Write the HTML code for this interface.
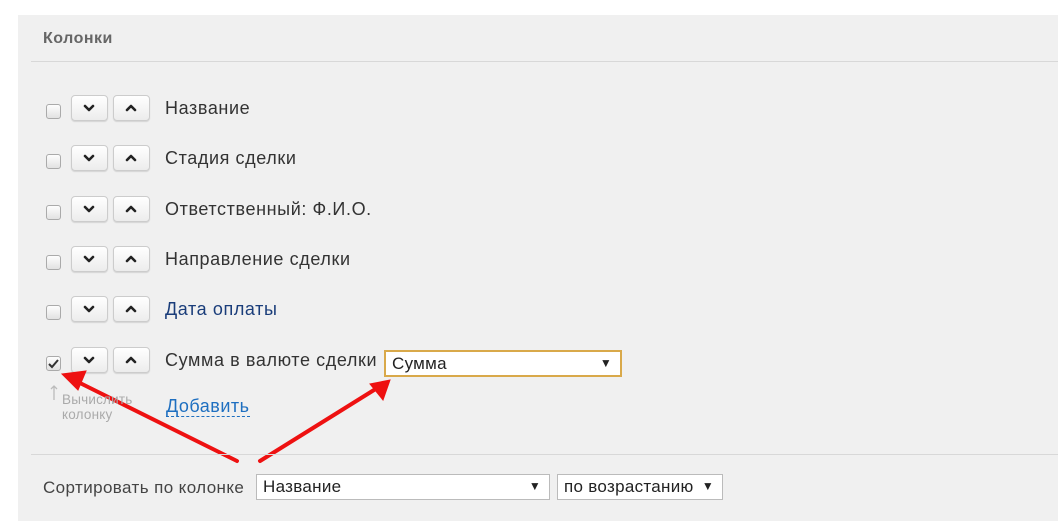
<!DOCTYPE html>
<html><head><meta charset="utf-8"><style>
body{margin:0;width:1058px;height:524px;background:#fff;position:relative;overflow:hidden;font-family:"Liberation Sans",Arial,sans-serif}
.panel{position:absolute;left:18px;top:15px;width:1040px;height:506px;background:#f0f0f0}
.abs{position:absolute}
.hd{left:43px;top:30px;font-size:16px;font-weight:bold;color:#666;letter-spacing:0.5px}
.hr{height:1px;background:#d8d8d8}
.cb{width:13px;height:13px;border:1px solid #aaa;border-radius:3px;background:linear-gradient(#fdfdfd,#e2e2e2)}
.bt{width:35px;height:24px;border:1px solid #ccc;border-radius:4px;background:linear-gradient(#fff,#ececec);box-shadow:0 1px 1px rgba(0,0,0,.12)}
.lbl{font-size:18px;color:#333;left:165px;letter-spacing:0.6px}
.sel{background:#fff;border:1px solid #bbb;font-size:17px;letter-spacing:0.3px;color:#222;box-sizing:border-box;padding:2px 6px}
.sel span{position:absolute;right:8px;top:4px;font-size:12px}
</style></head><body>
<div class="panel"></div>
<div class="abs hd">Колонки</div>
<div class="abs hr" style="left:31px;top:61px;width:1027px"></div>

<div class="abs cb" style="left:46px;top:104px"></div><div class="abs bt" style="left:71px;top:95px"></div><div class="abs bt" style="left:113px;top:95px"></div><div class="abs lbl" style="top:98px">Название</div>
<div class="abs cb" style="left:46px;top:154px"></div><div class="abs bt" style="left:71px;top:145px"></div><div class="abs bt" style="left:113px;top:145px"></div><div class="abs lbl" style="top:148px">Стадия сделки</div>
<div class="abs cb" style="left:46px;top:205px"></div><div class="abs bt" style="left:71px;top:196px"></div><div class="abs bt" style="left:113px;top:196px"></div><div class="abs lbl" style="top:199px">Ответственный: Ф.И.О.</div>
<div class="abs cb" style="left:46px;top:255px"></div><div class="abs bt" style="left:71px;top:246px"></div><div class="abs bt" style="left:113px;top:246px"></div><div class="abs lbl" style="top:249px">Направление сделки</div>
<div class="abs cb" style="left:46px;top:305px"></div><div class="abs bt" style="left:71px;top:296px"></div><div class="abs bt" style="left:113px;top:296px"></div><div class="abs lbl" style="top:299px;color:#1a3d7a">Дата оплаты</div>
<div class="abs cb" style="left:46px;top:356px"></div><div class="abs bt" style="left:71px;top:347px"></div><div class="abs bt" style="left:113px;top:347px"></div><div class="abs lbl" style="top:350px">Сумма в валюте сделки</div>

<svg class="abs" style="left:0;top:0" width="1058" height="524">
<g fill="none" stroke="#222" stroke-width="2.6" stroke-linecap="round" stroke-linejoin="round">
<path d="M85 106l4 4 4-4M85 156l4 4 4-4M85 207l4 4 4-4M85 257l4 4 4-4M85 307l4 4 4-4M85 358l4 4 4-4"/>
<path d="M127 110l4-4 4 4M127 160l4-4 4 4M127 211l4-4 4 4M127 261l4-4 4 4M127 311l4-4 4 4M127 362l4-4 4 4"/>
</g>
<path d="M49 364l3 3 6-7" fill="none" stroke="#333" stroke-width="2"/>
<path d="M54 386v14M51 389l3-3 3 3" fill="none" stroke="#bbb" stroke-width="1.3"/>
<g stroke="#ee1111" stroke-width="4" fill="#ee1111" stroke-linecap="round">
<line x1="237" y1="461" x2="80" y2="383"/><polygon points="62,374 86,371 78,390" stroke-width="1"/>
<line x1="260" y1="461" x2="374" y2="390"/><polygon points="390,380 383,400 370,384" stroke-width="1"/>
</g>
</svg>
<div class="abs" style="left:62px;top:392px;font-size:13.5px;color:#aaa;line-height:15px;letter-spacing:0.2px">Вычислить<br>колонку</div>
<div class="abs" style="left:166px;top:396px;font-size:18px;letter-spacing:0.5px;color:#1e6fc0;border-bottom:1px dashed #1e6fc0;line-height:20px">Добавить</div>

<div class="abs sel" style="left:384px;top:350px;width:238px;height:27px;border-color:#d9a94a;border-width:2px">Сумма<span>▼</span></div>

<div class="abs hr" style="left:31px;top:454px;width:1027px"></div>
<div class="abs" style="left:43px;top:478px;font-size:17px;letter-spacing:0.4px;color:#444">Сортировать по колонке</div>
<div class="abs sel" style="left:256px;top:474px;width:294px;height:26px">Название<span>▼</span></div>
<div class="abs sel" style="left:557px;top:474px;width:166px;height:26px">по возрастанию<span>▼</span></div>
</body></html>
